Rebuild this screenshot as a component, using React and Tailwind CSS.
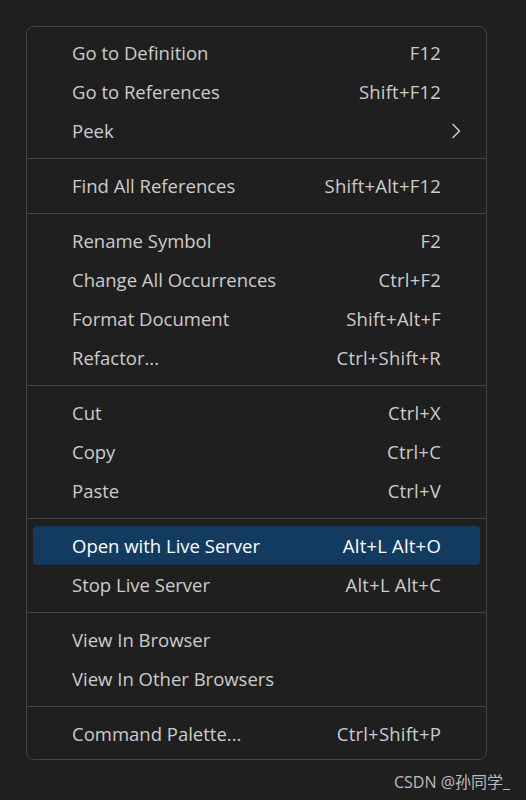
import React from 'react';

const groups = [
  [
    { label: 'Go to Definition', keys: 'F12' },
    { label: 'Go to References', keys: 'Shift+F12' },
    { label: 'Peek', submenu: true },
  ],
  [{ label: 'Find All References', keys: 'Shift+Alt+F12' }],
  [
    { label: 'Rename Symbol', keys: 'F2' },
    { label: 'Change All Occurrences', keys: 'Ctrl+F2' },
    { label: 'Format Document', keys: 'Shift+Alt+F' },
    { label: 'Refactor...', keys: 'Ctrl+Shift+R' },
  ],
  [
    { label: 'Cut', keys: 'Ctrl+X' },
    { label: 'Copy', keys: 'Ctrl+C' },
    { label: 'Paste', keys: 'Ctrl+V' },
  ],
  [
    { label: 'Open with Live Server', keys: 'Alt+L Alt+O', active: true },
    { label: 'Stop Live Server', keys: 'Alt+L Alt+C' },
  ],
  [
    { label: 'View In Browser' },
    { label: 'View In Other Browsers' },
  ],
  [{ label: 'Command Palette...', keys: 'Ctrl+Shift+P' }],
];

function Chevron() {
  return (
    <svg width="10" height="16" viewBox="0 0 10 16" fill="none" className="mr-[-20px]">
      <path d="M2 1.5 L8.5 8 L2 14.5" stroke="#cccccc" strokeWidth="1.5" strokeLinecap="round" strokeLinejoin="round" />
    </svg>
  );
}

function MenuItem({ item }) {
  return (
    <div
      className={
        'mx-[6px] h-[39px] flex items-center justify-between pl-[39px] pr-[39px] pt-px rounded-[4px] ' +
        (item.active ? 'bg-[#133a5f] text-white' : 'text-[#cccccc]')
      }
    >
      <span>{item.label}</span>
      {item.keys && <span className="tracking-[0.2px]">{item.keys}</span>}
      {item.submenu && <Chevron />}
    </div>
  );
}

export default function App() {
  return (
    <div
      className="min-h-[800px] bg-[#1f1f1f] pt-[26px] pl-[26px]"
      style={{ fontFamily: '"Open Sans", "Noto Sans CJK SC", sans-serif' }}
    >
      <div className="w-[461px] border border-[#454545] rounded-[8px] bg-[#1f1f1f] py-[6px] text-[18.5px]">
        {groups.map((g, i) => (
          <div key={i}>
            {i > 0 && <div className="h-px bg-[#454545] mt-[8px] mb-[7px]" />}
            {g.map((item) => (
              <MenuItem key={item.label} item={item} />
            ))}
          </div>
        ))}
      </div>
      <div className="flex justify-end pr-[16px] mt-[14px] text-[16px] text-[#bdbdbd] leading-none">
        CSDN @孙同学_
      </div>
    </div>
  );
}
